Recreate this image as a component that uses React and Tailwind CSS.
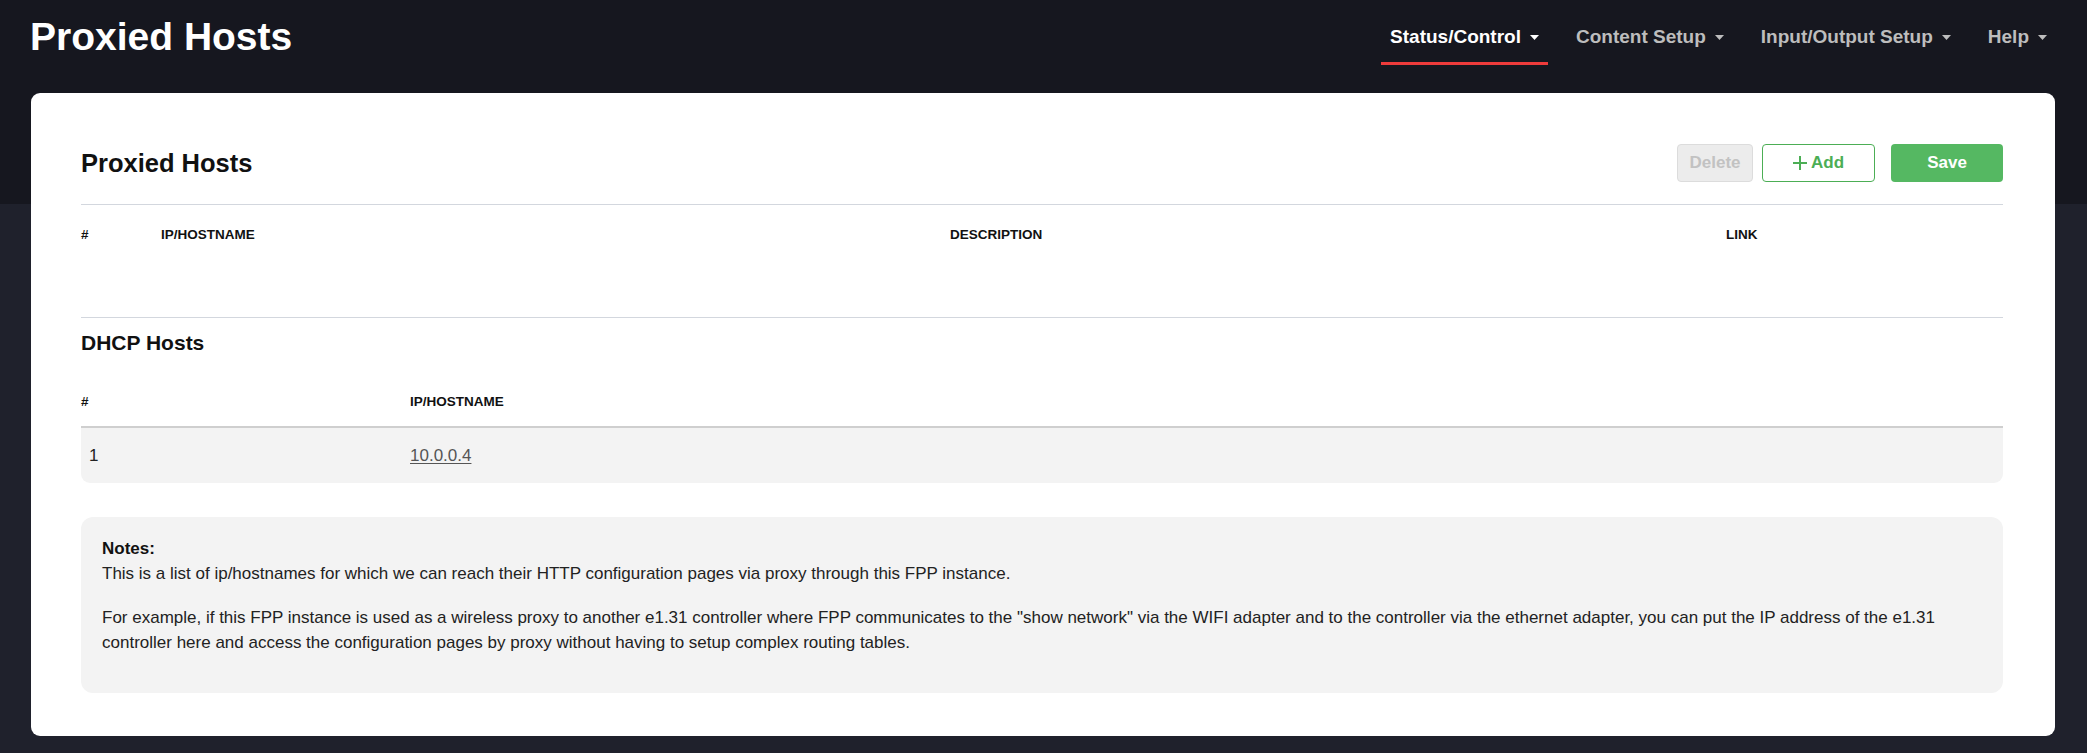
import React from 'react';

const navItems = [
  { label: 'Status/Control', active: true },
  { label: 'Content Setup' },
  { label: 'Input/Output Setup' },
  { label: 'Help' },
];

function Caret({ active }) {
  return (
    <svg width="9" height="5" viewBox="0 0 9 5" className="ml-[9px] mt-[1px]">
      <path d="M0 0 L9 0 L4.5 5 Z" fill={active ? '#ffffff' : '#bdbdbd'} />
    </svg>
  );
}

export default function App() {
  return (
    <div
      className="min-h-[753px] bg-[linear-gradient(#16171f_204px,#1f212c_204px)] pb-[20px] text-[#222]"
      style={{ fontFamily: '"Liberation Sans", Arial, sans-serif' }}
    >
      {/* Top bar */}
      <div className="flex items-start justify-between h-[93px] pl-[30px] pr-[31px]">
        <h1 className="pt-[14px] text-[39px] leading-[46px] font-bold text-white">Proxied Hosts</h1>
        <nav className="flex gap-[19px] pt-[24px]">
          {navItems.map((item) => (
            <div
              key={item.label}
              className={
                'flex items-center px-[9px] pb-[12px] border-b-[3px] ' +
                (item.active ? 'border-[#ee3b3b]' : 'border-transparent')
              }
            >
              <span
                className={
                  'text-[19px] leading-[26px] font-bold ' +
                  (item.active ? 'text-white' : 'text-[#bdbdbd]')
                }
              >
                {item.label}
              </span>
              <Caret active={item.active} />
            </div>
          ))}
        </nav>
      </div>

      {/* Card */}
      <div className="ml-[31px] mr-[32px] bg-white rounded-[9px] pl-[50px] pr-[52px] pt-[51px] pb-[43px]">
        <div className="flex items-center justify-between h-[38px]">
          <h2 className="text-[25.5px] leading-[30px] font-bold text-[#111]">Proxied Hosts</h2>
          <div className="flex items-center">
            <button className="w-[76px] h-[38px] rounded-[4px] bg-[#ececec] border border-[#dcdcdc] text-[17px] font-bold text-[#c2c2c2]">
              Delete
            </button>
            <button className="ml-[9px] w-[113px] h-[38px] rounded-[4px] bg-white border border-[#4cae55] text-[17px] font-bold text-[#4cae55] flex items-center justify-center">
              <svg width="14" height="14" viewBox="0 0 14 14" className="mr-[4px]">
                <path d="M7 0 V14 M0 7 H14" stroke="#4cae55" strokeWidth="2" />
              </svg>
              Add
            </button>
            <button className="ml-[16px] w-[112px] h-[38px] rounded-[4px] bg-[#55b862] text-[17px] font-bold text-white">
              Save
            </button>
          </div>
        </div>

        <div className="mt-[22px] border-t border-[#d3d7de]">
          <div className="flex items-center h-[58px] pt-[2px] text-[13.5px] font-bold text-[#111]">
            <div className="w-[80px]">#</div>
            <div className="w-[789px]">IP/HOSTNAME</div>
            <div className="w-[776px]">DESCRIPTION</div>
            <div className="flex-1">LINK</div>
          </div>
          <div className="h-[54px]" />
        </div>

        <div className="border-t border-[#d3d7de]">
          <h3 className="mt-[13px] text-[21px] leading-[24px] font-bold text-[#111]">DHCP Hosts</h3>
          <div className="mt-[23px]">
            <div className="flex items-center h-[50px] border-b-2 border-[#cfcfcf] text-[13.5px] font-bold text-[#111]">
              <div className="w-[329px]">#</div>
              <div className="flex-1">IP/HOSTNAME</div>
            </div>
            <div className="flex items-center h-[55px] bg-[#f3f3f3] rounded-b-[9px] text-[17px]">
              <div className="w-[329px] pl-[8px] text-[#222]">1</div>
              <a className="flex-1 text-[#555] underline underline-offset-2">10.0.0.4</a>
            </div>
          </div>
        </div>

        <div className="mt-[34px] bg-[#f3f3f3] rounded-[12px] pl-[21px] pr-[24px] pt-[19px] pb-[38px] text-[17px] leading-[25px] text-[#222]">
          <div className="font-bold text-[#111]">Notes:</div>
          <p>This is a list of ip/hostnames for which we can reach their HTTP configuration pages via proxy through this FPP instance.</p>
          <p className="mt-[19px]">
            For example, if this FPP instance is used as a wireless proxy to another e1.31 controller where FPP communicates to the "show network" via the WIFI adapter and to the controller via the ethernet adapter, you can put the IP address of the e1.31 controller here and access the configuration pages by proxy without having to setup complex routing tables.
          </p>
        </div>
      </div>
    </div>
  );
}
